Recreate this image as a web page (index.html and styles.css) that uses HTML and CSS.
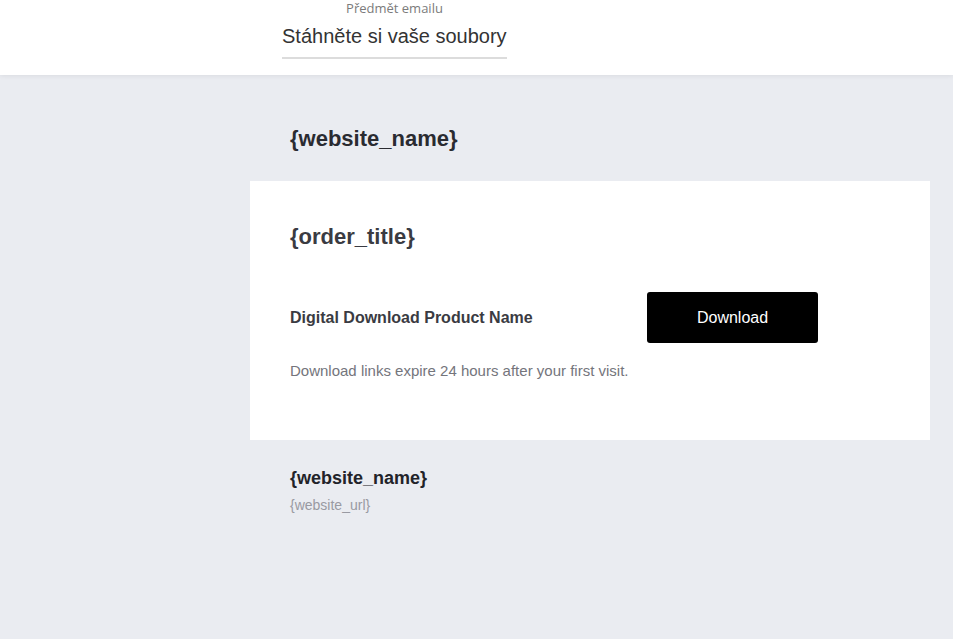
FILE: index.html
```html
<!DOCTYPE html>
<html lang="cs">
<head>
<meta charset="utf-8">
<title>Email</title>
<link rel="stylesheet" href="styles.css">
</head>
<body>
<header class="topbar">
  <div class="subject">
    <div class="subject-label">Předmět emailu</div>
    <div class="subject-input">Stáhněte si vaše soubory</div>
  </div>
</header>
<main class="preview">
  <div class="email">
    <div class="brand">{website_name}</div>
    <section class="card">
      <h1 class="order-title">{order_title}</h1>
      <div class="product-row">
        <div class="product-name">Digital Download Product Name</div>
        <div class="btn">Download</div>
      </div>
      <p class="note">Download links expire 24 hours after your first visit.</p>
    </section>
    <footer class="footer">
      <div class="footer-name">{website_name}</div>
      <div class="footer-url">{website_url}</div>
    </footer>
  </div>
</main>
</body>
</html>
```
FILE: styles.css
```css
html, body {
  margin: 0;
  padding: 0;
}
body {
  background: #eaecf1;
  font-family: "Liberation Sans", Arial, sans-serif;
  height: 639px;
  overflow: hidden;
}
.topbar {
  position: relative;
  z-index: 1;
  height: 75px;
  background: #ffffff;
  box-shadow: 0 1px 5px rgba(0, 0, 0, 0.07);
}
.subject {
  margin-left: 282px;
  width: 225px;
  display: flex;
  flex-direction: column;
}
.subject-label {
  font-family: "Open Sans", "Noto Sans", sans-serif;
  font-size: 13px;
  line-height: 16px;
  color: #7b7b7b;
  text-align: center;
}
.subject-input {
  margin-top: 8px;
  font-size: 20px;
  line-height: 24px;
  color: #333333;
  padding-bottom: 9px;
  border-bottom: 2px solid #dcdcdc;
  white-space: nowrap;
}
.preview {
  padding-top: 51px;
  padding-left: 250px;
}
.email {
  width: 680px;
}
.brand {
  padding-left: 40px;
  font-size: 22px;
  line-height: 26px;
  font-weight: bold;
  color: #2a2b31;
}
.card {
  margin-top: 29px;
  background: #ffffff;
  padding: 43px 40px 60px 40px;
}
.order-title {
  margin: 0;
  font-size: 22px;
  line-height: 26px;
  font-weight: bold;
  color: #3a3b42;
}
.product-row {
  margin-top: 42px;
  display: flex;
  align-items: center;
}
.product-name {
  width: 357px;
  font-size: 16px;
  line-height: 20px;
  font-weight: bold;
  color: #3a3b42;
}
.btn {
  width: 171px;
  height: 51px;
  background: #000000;
  border-radius: 3px;
  color: #ffffff;
  font-size: 16px;
  display: flex;
  align-items: center;
  justify-content: center;
}
.note {
  margin: 19px 0 0 0;
  font-size: 15px;
  line-height: 18px;
  color: #74757c;
}
.footer {
  padding: 27px 0 0 40px;
}
.footer-name {
  font-size: 18px;
  line-height: 22px;
  font-weight: bold;
  color: #222329;
}
.footer-url {
  margin-top: 7px;
  font-size: 14px;
  line-height: 18px;
  color: #999aa2;
}
```
